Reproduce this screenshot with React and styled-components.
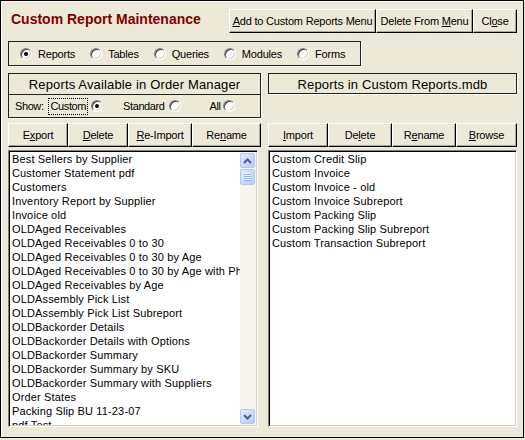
import React from 'react';
import styled, { createGlobalStyle } from 'styled-components';

const Global = createGlobalStyle`
  html, body { margin: 0; padding: 0; background: #ECE9D8; }
  body { font-family: "Liberation Sans", Arial, sans-serif; font-size: 11px; color: #000; }
  * { box-sizing: border-box; }
`;

const Window = styled.div`
  width: 524px;
  height: 438px;
  border: 1px solid #000;
  background: #ECE9D8;
  box-shadow: inset 1px 1px 0 #fff;
  padding: 8px 6px 0 7px;
  display: flex;
  flex-direction: column;
`;

const TopBar = styled.div`
  display: flex;
  justify-content: space-between;
  align-items: flex-start;
  height: 24px;
`;

const Title = styled.h1`
  margin: 0;
  padding: 2px 0 0 3px;
  font-size: 14px;
  font-weight: bold;
  color: #800000;
  font-family: "Liberation Sans", Arial, sans-serif;
`;

const ButtonRow = styled.div`
  display: flex;
`;

const Button = styled.button`
  width: ${p => p.$w}px;
  height: 24px;
  padding: 0;
  background: #ECE9D8;
  border: 1px solid;
  border-color: #fff #000 #000 #fff;
  box-shadow: inset -1px -1px 0 #ACA899;
  font-family: "Liberation Sans", Arial, sans-serif;
  font-size: 11px;
  letter-spacing: -0.2px;
  color: #000;
  white-space: nowrap;
  u { text-decoration: underline; text-underline-offset: 1px; }
`;

const GroupBox = styled.div`
  border: 1px solid #222;
  box-shadow: 1px 1px 0 #fff;
`;

const ObjectBox = styled(GroupBox)`
  width: 353px;
  height: 25px;
  margin-top: 8px;
  display: flex;
  align-items: center;
  gap: 15px;
  padding-left: 11px;
  letter-spacing: -0.2px;
`;

const Option = styled.label`
  display: flex;
  align-items: center;
  gap: ${p => p.$gap ?? 6}px;
`;

const Radio = styled.span`
  position: relative;
  flex: none;
  width: 12px;
  height: 12px;
  border-radius: 50%;
  background: #fff;
  border: 1px solid;
  border-color: #808080 #fff #fff #808080;
  box-shadow: inset 1px 1px 0 #404040, inset -1px -1px 0 #D4D0C8;
  &::after {
    content: '';
    display: ${p => (p.$on ? 'block' : 'none')};
    position: absolute;
    left: 3px;
    top: 3px;
    width: 4px;
    height: 4px;
    border-radius: 50%;
    background: #000;
  }
`;

const Panels = styled.div`
  display: grid;
  grid-template-columns: 253px 249px;
  column-gap: 7px;
  margin-top: 7px;
`;

const Column = styled.div`
  display: flex;
  flex-direction: column;
`;

const HeaderBox = styled(GroupBox)`
  height: ${p => p.$h}px;
  margin-bottom: ${p => 50 - p.$h}px;
`;

const Heading = styled.div`
  height: 20px;
  display: flex;
  align-items: center;
  justify-content: center;
  font-size: 13px;
  letter-spacing: 0.15px;
`;

const ShowRow = styled.div`
  height: 23px;
  border-top: 1px solid #222;
  display: flex;
  align-items: center;
  padding-left: 6px;
  letter-spacing: -0.4px;
`;

const ShowItem = styled.span`
  display: flex;
  align-items: center;
  margin-left: ${p => p.$ml || 0}px;
  gap: ${p => p.$gap || 0}px;
`;

const Focus = styled.span`
  border: 1px dotted #000;
  height: 17px;
  display: flex;
  align-items: center;
  padding: 0 1px 0 2px;
`;

const Actions = styled.div`
  display: flex;
`;

const ListBox = styled.div`
  width: ${p => p.$w}px;
  height: 277px;
  margin-top: 3px;
  background: #fff;
  border: 1px solid;
  border-color: #808080 #fff #fff #808080;
  box-shadow: inset 1px 1px 0 #000, inset -1px -1px 0 #D4D0C8;
  padding: 1px;
  display: flex;
  overflow: hidden;
`;

const Items = styled.ul`
  flex: 1;
  min-width: 0;
  margin: 0;
  padding: 0 0 0 2px;
  list-style: none;
  overflow: hidden;
`;

const Item = styled.li`
  height: 14px;
  line-height: 14px;
  font-size: 11px;
  letter-spacing: 0.15px;
  white-space: nowrap;
  overflow: hidden;
`;

const ScrollBar = styled.div`
  width: 16px;
  flex: none;
  background: #F6F5F0;
  display: flex;
  flex-direction: column;
  padding: 1px 1px 1px 0;
`;

const ScrollButton = styled.div`
  height: ${p => p.$h || 15}px;
  margin-top: ${p => p.$mt || 0}px;
  border: 1px solid #B4C8F6;
  border-radius: 2px;
  background: linear-gradient(135deg, #E3ECFD 0%, #C6D6FB 60%, #B6CAF7 100%);
  display: flex;
  align-items: center;
  justify-content: center;
`;

const Spacer = styled.div`
  flex: 1;
`;

const Grip = () => (
  <svg width="7" height="8" viewBox="0 0 7 8">
    {[0, 2, 4, 6].map(y => (
      <g key={y}>
        <rect x="0" y={y} width="7" height="1" fill="#EEF4FE" />
        <rect x="0" y={y + 1} width="7" height="1" fill="#8CB0F8" />
      </g>
    ))}
  </svg>
);

const Chevron = ({ up }) => (
  <svg width="9" height="6" viewBox="0 0 9 6">
    <path
      d={up ? 'M1 5 L4.5 1.5 L8 5' : 'M1 1 L4.5 4.5 L8 1'}
      fill="none"
      stroke="#4D6185"
      strokeWidth="2"
    />
  </svg>
);

const available = [
  'Best Sellers by Supplier',
  'Customer Statement pdf',
  'Customers',
  'Inventory Report by Supplier',
  'Invoice old',
  'OLDAged Receivables',
  'OLDAged Receivables 0 to 30',
  'OLDAged Receivables 0 to 30 by Age',
  'OLDAged Receivables 0 to 30 by Age with Phone',
  'OLDAged Receivables by Age',
  'OLDAssembly Pick List',
  'OLDAssembly Pick List Subreport',
  'OLDBackorder Details',
  'OLDBackorder Details with Options',
  'OLDBackorder Summary',
  'OLDBackorder Summary by SKU',
  'OLDBackorder Summary with Suppliers',
  'Order States',
  'Packing Slip BU 11-23-07',
  'pdf Test',
];

const custom = [
  'Custom Credit Slip',
  'Custom Invoice',
  'Custom Invoice - old',
  'Custom Invoice Subreport',
  'Custom Packing Slip',
  'Custom Packing Slip Subreport',
  'Custom Transaction Subreport',
];

const objectTypes = ['Reports', 'Tables', 'Queries', 'Modules', 'Forms'];

export default function App() {
  return (
    <>
      <Global />
      <Window>
        <TopBar>
          <Title>Custom Report Maintenance</Title>
          <ButtonRow>
            <Button $w={147}><u>A</u>dd to Custom Reports Menu</Button>
            <Button $w={97}>Delete From <u>M</u>enu</Button>
            <Button $w={44}>Cl<u>o</u>se</Button>
          </ButtonRow>
        </TopBar>

        <ObjectBox>
          {objectTypes.map((t, i) => (
            <Option key={t}>
              <Radio $on={i === 0} />
              {t}
            </Option>
          ))}
        </ObjectBox>

        <Panels>
          <Column>
            <HeaderBox $h={45}>
              <Heading>Reports Available in Order Manager</Heading>
              <ShowRow>
                <ShowItem>Show:</ShowItem>
                <ShowItem $ml={4} $gap={3}>
                  <Focus>Custom</Focus>
                  <Radio $on />
                </ShowItem>
                <ShowItem $ml={20} $gap={4}>
                  Standard
                  <Radio />
                </ShowItem>
                <ShowItem $ml={29} $gap={2}>
                  All
                  <Radio />
                </ShowItem>
              </ShowRow>
            </HeaderBox>
            <Actions>
              <Button $w={60}>E<u>x</u>port</Button>
              <Button $w={60}><u>D</u>elete</Button>
              <Button $w={64}><u>R</u>e-Import</Button>
              <Button $w={69}>Re<u>n</u>ame</Button>
            </Actions>
            <ListBox $w={250}>
              <Items>
                {available.map(r => <Item key={r}>{r}</Item>)}
              </Items>
              <ScrollBar>
                <ScrollButton><Chevron up /></ScrollButton>
                <ScrollButton $mt={1} $h={16}><Grip /></ScrollButton>
                <Spacer />
                <ScrollButton><Chevron /></ScrollButton>
              </ScrollBar>
            </ListBox>
          </Column>

          <Column>
            <HeaderBox $h={21}>
              <Heading>Reports in Custom Reports.mdb</Heading>
            </HeaderBox>
            <Actions>
              <Button $w={60}><u>I</u>mport</Button>
              <Button $w={64}>De<u>l</u>ete</Button>
              <Button $w={64}>R<u>e</u>name</Button>
              <Button $w={61}><u>B</u>rowse</Button>
            </Actions>
            <ListBox $w={249}>
              <Items>
                {custom.map(r => <Item key={r}>{r}</Item>)}
              </Items>
            </ListBox>
          </Column>
        </Panels>
      </Window>
    </>
  );
}
